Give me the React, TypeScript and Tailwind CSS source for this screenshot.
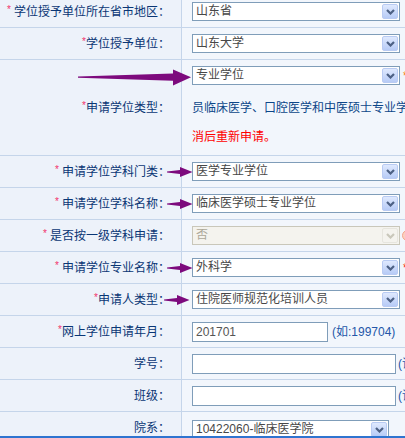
import type { ReactNode } from 'react';

const Chevron = ({ disabled }: { disabled?: boolean }) => (
  <svg width="9" height="6" viewBox="0 0 9 6">
    <polyline points="1,1 4.5,4.5 8,1" fill="none" stroke={disabled ? '#c9c7ba' : '#4d6185'} strokeWidth="2.2" />
  </svg>
);

const Select = ({ value, w = 'w-[208px]', disabled }: { value: string; w?: string; disabled?: boolean }) => (
  <div
    className={`${w} h-[19px] shrink-0 flex items-center border ${
      disabled ? 'border-[#c9c7ba] bg-[#f4f3ee] text-[#aca899]' : 'border-[#7f9db9] bg-white text-[#474747]'
    }`}
  >
    <span className="flex-1 pl-[3px] leading-[17px] whitespace-nowrap overflow-hidden">{value}</span>
    <span
      className={`w-[16px] h-[15px] mr-px flex items-center justify-center rounded-[2px] border ${
        disabled ? 'border-[#e6e5de] bg-[#f4f3ee]' : 'border-[#b9cbf3] bg-linear-to-b from-[#dfe9fe] to-[#b7cbf6]'
      }`}
    >
      <Chevron disabled={disabled} />
    </span>
  </div>
);

const Input = ({ value, w }: { value?: string; w: string }) => (
  <div className={`${w} h-[20px] shrink-0 border border-[#7f9db9] bg-white pl-[3px] leading-[18px] text-[#555]`}>{value}</div>
);

const SmallArrow = ({ left = 'left-[167px]' }: { left?: string }) => (
  <svg className={`absolute ${left} top-1/2 -translate-y-1/2`} width="26" height="11" viewBox="0 0 26 11">
    <polygon points="0,5 13,3.6 13,0.5 25.5,5.5 13,10.5 13,7.4 0,6" fill="#7d0a7d" />
  </svg>
);

const BigArrow = () => (
  <svg className="absolute left-[78px] top-[9px]" width="114" height="17" viewBox="0 0 114 17">
    <polygon points="0,7.6 95,4.6 95,0.5 113,8.3 95,16.5 95,11.8 0,8.8" fill="#7d0a7d" />
  </svg>
);

const Label = ({ text, star = true, gap }: { text: string; star?: boolean; gap?: boolean }) => (
  <span className="flex items-start">
    {star && <span className={`text-[10px] leading-[10px] text-[#f2336b] ${gap ? 'mr-[3px]' : ''}`}>*</span>}
    <span className="leading-[14px] whitespace-nowrap">{text}</span>
  </span>
);

const Row = ({
  label,
  h = 'h-[32px]',
  valueClass = 'items-center',
  arrow,
  children,
}: {
  label: ReactNode;
  h?: string;
  valueClass?: string;
  arrow?: ReactNode;
  children?: ReactNode;
}) => (
  <div className={`relative grid grid-cols-[182px_1fr] border-b border-[#c5d5ea] ${h}`}>
    <div className="flex items-center justify-end pr-[11px] border-r border-[#c5d5ea] bg-[#edf2fa] text-[#0a3675]">
      {label}
    </div>
    <div className={`flex pl-[10px] overflow-hidden bg-[#f2f6fc] ${valueClass}`}>{children}</div>
    {arrow}
  </div>
);

export default function App() {
  return (
    <div className="w-[405px] h-[438px] flex flex-col overflow-hidden bg-[#f2f6fc] text-[12px] font-['Liberation_Sans','Noto_Sans_CJK_SC',sans-serif]">
      <div className="flex-1 overflow-hidden">
        <div className="-mt-[4px]">
          <Row label={<Label text="学位授予单位所在省市地区：" gap />}>
            <Select value="山东省" />
          </Row>
          <Row label={<Label text="学位授予单位：" />}>
            <Select value="山东大学" />
          </Row>
          <Row
            h="h-[96px]"
            valueClass="flex-col items-start pt-[6px]"
            label={<Label text="申请学位类型：" />}
            arrow={<BigArrow />}
          >
            <div className="flex items-center">
              <Select value="专业学位" />
              <span className="ml-[3px] text-[#ff6a00]">*</span>
            </div>
            <p className="mt-[15px] leading-[16px] whitespace-nowrap text-[#0c4689]">
              员临床医学、口腔医学和中医硕士专业学位
            </p>
            <p className="mt-[13px] leading-[16px] whitespace-nowrap text-[#f00]">消后重新申请。</p>
          </Row>
          <Row label={<Label text="申请学位学科门类：" gap />} arrow={<SmallArrow />}>
            <Select value="医学专业学位" />
          </Row>
          <Row label={<Label text="申请学位学科名称：" gap />} arrow={<SmallArrow />}>
            <Select value="临床医学硕士专业学位" />
          </Row>
          <Row label={<Label text="是否按一级学科申请：" gap />}>
            <Select value="否" disabled />
            <span className="ml-[2px] w-[11px] h-[11px] shrink-0 rounded-full border border-[#f3a58e] bg-[#fbd0c0]" />
          </Row>
          <Row label={<Label text="申请学位专业名称：" gap />} arrow={<SmallArrow />}>
            <Select value="外科学" />
            <span className="ml-[3px] text-[#f00]">*</span>
          </Row>
          <Row label={<Label text="申请人类型：" />} arrow={<SmallArrow left="left-[164px]" />}>
            <Select value="住院医师规范化培训人员" />
          </Row>
          <Row label={<Label text="网上学位申请年月：" />}>
            <Input value="201701" w="w-[136px]" />
            <span className="ml-[4px] whitespace-nowrap text-[#2456a8]">(如:199704)</span>
          </Row>
          <Row label={<Label text="学号：" star={false} />}>
            <Input w="w-[204px]" />
            <span className="ml-[2px] whitespace-nowrap text-[#2456a8]">(请填写)</span>
          </Row>
          <Row label={<Label text="班级：" star={false} />}>
            <Input w="w-[204px]" />
            <span className="ml-[2px] whitespace-nowrap text-[#2456a8]">(请填写)</span>
          </Row>
          <Row label={<Label text="院系：" star={false} />} valueClass="items-start pt-[8px]">
            <Select value="10422060-临床医学院" w="w-[197px]" />
          </Row>
        </div>
      </div>
      <div className="h-[2px] shrink-0 bg-[#2f74d0]" />
    </div>
  );
}
